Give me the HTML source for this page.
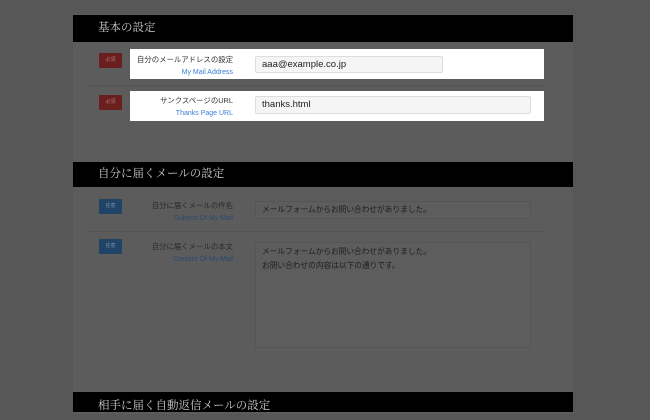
<!DOCTYPE html>
<html><head><meta charset="utf-8"><style>
body{margin:0;width:650px;height:408px;background:#575757;overflow:hidden;font-family:"Liberation Sans","Noto Sans CJK JP",sans-serif;position:relative}
.panel{position:absolute;left:73px;top:14px;width:500px;height:400px;background:#5c5c5c}
.h{position:absolute;left:73px;width:500px;background:#000;color:#ccc;font-family:"Liberation Serif","Noto Serif CJK SC",serif;font-size:11.5px;box-sizing:border-box;padding-left:25px}
.b{position:absolute;left:99px;width:23px;height:15px;font-size:5px;color:#a77;text-align:center;line-height:15px;border-radius:1px}
.red{background:#6b1e1e}.blue{background:#1f4466;color:#7890a8}
.w{position:absolute;left:130px;width:414px;height:30px;background:#fff}
.l{position:absolute;right:417px;text-align:right;font-size:7.4px;color:#333;line-height:13px;white-space:nowrap}
.l span{display:block;color:#3b7fd4;font-size:7px}
.l.d{color:#2a2a2a}.l.d span{color:#2a4a70}
.i{position:absolute;left:255px;box-sizing:border-box;border:1px solid #ddd;background:#f5f5f5;border-radius:2px;font-size:9.5px;color:#222;padding:0 6px}
.i.d{background:#5d5d5d;border-color:#555;color:#1d1d1d;font-size:7.7px}
.hr{position:absolute;left:85px;width:460px;height:1px;background:#555}
</style></head><body>
<div class="panel"></div>
<div class="h" style="top:15px;height:27px;line-height:27px">基本の設定</div>
<div class="b red" style="top:53px">必須</div>
<div class="w" style="top:49px"></div>
<div class="l" style="top:53px">自分のメールアドレスの設定<span>My Mail Address</span></div>
<div class="i" style="top:56px;width:188px;height:17px;line-height:15px">aaa@example.co.jp</div>
<div class="hr" style="top:85px"></div>
<div class="b red" style="top:95px">必須</div>
<div class="w" style="top:91px"></div>
<div class="l" style="top:94px">サンクスページのURL<span>Thanks Page URL</span></div>
<div class="i" style="top:96px;width:276px;height:18px;line-height:16px">thanks.html</div>
<div class="h" style="top:162px;height:25px;line-height:25px">自分に届くメールの設定</div>
<div class="b blue" style="top:199px">任意</div>
<div class="l d" style="top:199px">自分に届くメールの件名<span>Subject Of My Mail</span></div>
<div class="i d" style="top:201px;width:276px;height:18px;line-height:16px">メールフォームからお問い合わせがありました。</div>
<div class="hr" style="top:231px"></div>
<div class="b blue" style="top:239px">任意</div>
<div class="l d" style="top:240px">自分に届くメールの本文<span>Content Of My Mail</span></div>
<div class="i d" style="top:242px;width:276px;height:106px;line-height:14px;padding-top:2px">メールフォームからお問い合わせがありました。<br>お問い合わせの内容は以下の通りです。</div>
<div class="h" style="top:392px;height:20px;line-height:28px">相手に届く自動返信メールの設定</div>
</body></html>
